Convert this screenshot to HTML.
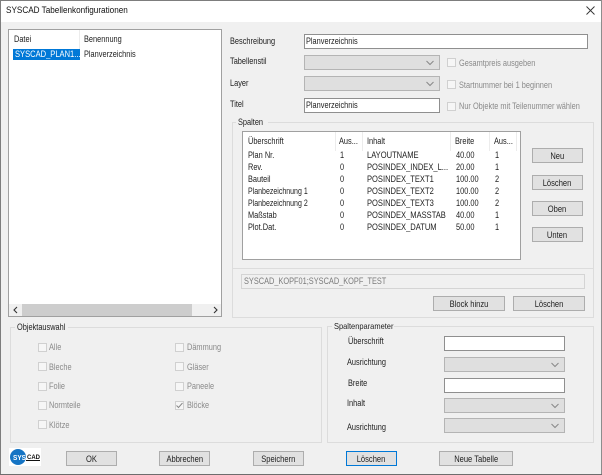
<!DOCTYPE html>
<html><head><meta charset="utf-8"><style>
*{box-sizing:border-box}
html,body{margin:0;padding:0}
body{width:602px;height:475px;overflow:hidden;background:#f0f0f0;position:relative;font:9px/12px "Liberation Sans",sans-serif;color:#222}
#w{position:absolute;left:0;top:0;width:602px;height:475px;filter:blur(.35px)}
.a{position:absolute}
.t{position:absolute;white-space:nowrap;height:12px;line-height:12px;transform:scaleX(.82);transform-origin:0 50%}
.u{transform:scaleX(.84)}
.p{transform:scaleX(.78)}
.d{color:#8a8a8a}
.in{position:absolute;background:#fff;border:1px solid #8f8f8f;height:15px}
.cb{position:absolute;background:#dfdfdf;border:1px solid #b4b4b4;height:15px}
.cb svg{position:absolute;right:5px;top:4px}
.ck{position:absolute;width:9px;height:9px;background:#f6f6f6;border:1px solid #d0d0d0}
.b{position:absolute;height:15px;background:#e1e1e1;border:1px solid #adadad;text-align:center;line-height:14px;white-space:nowrap}
.b span{display:inline-block;transform:scaleX(.84)}
.g{position:absolute;border:1px solid #dcdcdc}
.gl{position:absolute;background:#f0f0f0;height:4px}
.s{position:absolute;width:1px;background:#ececec}
</style></head><body><div id="w">
<div class="a" style="left:0;top:0;width:602px;height:22px;background:#fff"></div>
<div class="a" style="left:0;top:0;width:602px;height:1px;background:#7d7d7d"></div>
<div class="a" style="left:0;top:0;width:1px;height:475px;background:#7d7d7d"></div>
<div class="a" style="left:601px;top:0;width:1px;height:475px;background:#8d8d8d"></div>
<div class="a" style="left:0;top:474px;width:602px;height:1px;background:#6d6d6d"></div>
<div class="t" style="left:6px;top:5px;font-size:9.6px;color:#111;transform:scaleX(.85)">SYSCAD Tabellenkonfigurationen</div>
<svg class="a" style="left:586px;top:6px" width="9" height="9"><path d="M.5.5l8 8M8.500.5l-8 8" stroke="#333" stroke-width=".9" fill="none"/></svg>

<div class="a" style="left:8px;top:29px;width:214px;height:288px;background:#fff;border:1px solid #a0a0a0"></div>
<div class="s" style="left:79px;top:30px;height:19px"></div>
<div class="t" style="left:14px;top:33px">Datei</div>
<div class="t" style="left:84px;top:33px">Benennung</div>
<div class="a" style="left:13px;top:49px;width:67px;height:11px;background:#0078d7"></div>
<div class="t u" style="left:15px;top:48px;color:#fff">SYSCAD_PLAN1...</div>
<div class="t" style="left:84px;top:48px">Planverzeichnis</div>
<div class="a" style="left:9px;top:304px;width:212px;height:12px;background:#f0f0f0"></div>
<div class="a" style="left:22px;top:304px;width:170px;height:12px;background:#cdcdcd"></div>
<svg class="a" style="left:12px;top:306px" width="8" height="8"><path d="M5 1L2 4l3 3" stroke="#333" stroke-width="1.1" fill="none"/></svg>
<svg class="a" style="left:211px;top:306px" width="8" height="8"><path d="M3 1l3 3-3 3" stroke="#333" stroke-width="1.1" fill="none"/></svg>

<div class="t" style="left:230px;top:35px">Beschreibung</div>
<div class="t" style="left:230px;top:55px">Tabellenstil</div>
<div class="t" style="left:230px;top:77px">Layer</div>
<div class="t" style="left:230px;top:98px">Titel</div>
<div class="in" style="left:304px;top:34px;width:284px"></div><div class="t" style="left:306px;top:35px">Planverzeichnis</div>
<div class="cb" style="left:304px;top:55px;width:136px"><svg width="8" height="6"><path d="M.5 1l3.500 3.500L7.500 1" stroke="#888" fill="none"/></svg></div>
<div class="cb" style="left:304px;top:76px;width:136px"><svg width="8" height="6"><path d="M.5 1l3.500 3.500L7.500 1" stroke="#888" fill="none"/></svg></div>
<div class="in" style="left:304px;top:98px;width:136px"></div><div class="t" style="left:306px;top:99px">Planverzeichnis</div>
<div class="ck" style="left:447px;top:58px"></div><div class="t d" style="left:459px;top:57px">Gesamtpreis ausgeben</div>
<div class="ck" style="left:447px;top:80px"></div><div class="t d" style="left:459px;top:79px">Startnummer bei 1 beginnen</div>
<div class="ck" style="left:447px;top:102px"></div><div class="t d" style="left:459px;top:100px">Nur Objekte mit Teilenummer wählen</div>

<div class="g" style="left:232px;top:122px;width:362px;height:196px"></div>
<div class="gl" style="left:236px;top:120px;width:32px"></div>
<div class="t" style="left:238px;top:116px">Spalten</div>
<div class="a" style="left:232px;top:268px;width:362px;height:1px;background:#dcdcdc"></div>
<div class="a" style="left:242px;top:131px;width:279px;height:129px;background:#fff;border:1px solid #a0a0a0"></div>
<div class="s" style="left:335px;top:132px;height:19px"></div>
<div class="s" style="left:362px;top:132px;height:19px"></div>
<div class="s" style="left:450px;top:132px;height:19px"></div>
<div class="s" style="left:489px;top:132px;height:19px"></div>
<div class="s" style="left:516px;top:132px;height:19px"></div>
<div class="t" style="left:248px;top:135px">Überschrift</div><div class="t" style="left:339px;top:135px">Aus...</div><div class="t" style="left:367px;top:135px">Inhalt</div><div class="t" style="left:455px;top:135px">Breite</div><div class="t" style="left:494px;top:135px">Aus...</div>
<div class="t" style="left:248px;top:149px">Plan Nr.</div><div class="t" style="left:340px;top:149px">1</div><div class="t u" style="left:367px;top:149px">LAYOUTNAME</div><div class="t" style="left:456px;top:149px">40.00</div><div class="t" style="left:495px;top:149px">1</div>
<div class="t" style="left:248px;top:161px">Rev.</div><div class="t" style="left:340px;top:161px">0</div><div class="t u" style="left:367px;top:161px">POSINDEX_INDEX_L...</div><div class="t" style="left:456px;top:161px">20.00</div><div class="t" style="left:495px;top:161px">1</div>
<div class="t" style="left:248px;top:173px">Bauteil</div><div class="t" style="left:340px;top:173px">0</div><div class="t u" style="left:367px;top:173px">POSINDEX_TEXT1</div><div class="t" style="left:456px;top:173px">100.00</div><div class="t" style="left:495px;top:173px">2</div>
<div class="t p" style="left:248px;top:185px">Planbezeichnung 1</div><div class="t" style="left:340px;top:185px">0</div><div class="t u" style="left:367px;top:185px">POSINDEX_TEXT2</div><div class="t" style="left:456px;top:185px">100.00</div><div class="t" style="left:495px;top:185px">2</div>
<div class="t p" style="left:248px;top:197px">Planbezeichnung 2</div><div class="t" style="left:340px;top:197px">0</div><div class="t u" style="left:367px;top:197px">POSINDEX_TEXT3</div><div class="t" style="left:456px;top:197px">100.00</div><div class="t" style="left:495px;top:197px">2</div>
<div class="t" style="left:248px;top:209px">Maßstab</div><div class="t" style="left:340px;top:209px">0</div><div class="t u" style="left:367px;top:209px">POSINDEX_MASSTAB</div><div class="t" style="left:456px;top:209px">40.00</div><div class="t" style="left:495px;top:209px">1</div>
<div class="t" style="left:248px;top:221px">Plot.Dat.</div><div class="t" style="left:340px;top:221px">0</div><div class="t u" style="left:367px;top:221px">POSINDEX_DATUM</div><div class="t" style="left:456px;top:221px">50.00</div><div class="t" style="left:495px;top:221px">1</div>
<div class="b" style="left:532px;top:148px;width:51px"><span>Neu</span></div>
<div class="b" style="left:532px;top:175px;width:51px"><span>Löschen</span></div>
<div class="b" style="left:532px;top:201px;width:51px"><span>Oben</span></div>
<div class="b" style="left:532px;top:227px;width:51px"><span>Unten</span></div>
<div class="a" style="left:241px;top:274px;width:344px;height:15px;border:1px solid #d4d4d4"></div>
<div class="t u" style="left:244px;top:275px;color:#7a7a7a;transform:scaleX(.82)">SYSCAD_KOPF01;SYSCAD_KOPF_TEST</div>
<div class="b" style="left:433px;top:296px;width:72px"><span>Block hinzu</span></div>
<div class="b" style="left:513px;top:296px;width:72px"><span>Löschen</span></div>

<div class="g" style="left:10px;top:327px;width:312px;height:116px"></div>
<div class="gl" style="left:15px;top:325px;width:53px"></div>
<div class="t" style="left:17px;top:321px">Objektauswahl</div>
<div class="ck" style="left:38px;top:343px"></div><div class="t d" style="left:49px;top:341px">Alle</div>
<div class="ck" style="left:38px;top:362px"></div><div class="t d" style="left:49px;top:361px">Bleche</div>
<div class="ck" style="left:38px;top:382px"></div><div class="t d" style="left:49px;top:380px">Folie</div>
<div class="ck" style="left:38px;top:401px"></div><div class="t d" style="left:49px;top:399px">Normteile</div>
<div class="ck" style="left:38px;top:420px"></div><div class="t d" style="left:49px;top:419px">Klötze</div>
<div class="ck" style="left:175px;top:343px"></div><div class="t d" style="left:187px;top:341px">Dämmung</div>
<div class="ck" style="left:175px;top:362px"></div><div class="t d" style="left:187px;top:361px">Gläser</div>
<div class="ck" style="left:175px;top:382px"></div><div class="t d" style="left:187px;top:380px">Paneele</div>
<div class="ck" style="left:175px;top:401px"><svg class="a" style="left:0;top:0" width="7" height="7"><path d="M.5 3.500l2 2 4-4.500" stroke="#888" fill="none"/></svg></div><div class="t d" style="left:187px;top:399px">Blöcke</div>

<div class="g" style="left:327px;top:326px;width:267px;height:117px"></div>
<div class="gl" style="left:332px;top:324px;width:62px"></div>
<div class="t" style="left:334px;top:320px;font-size:8.500px;transform:scaleX(.88)">Spaltenparameter</div>
<div class="t" style="left:348px;top:335px">Überschrift</div>
<div class="t" style="left:347px;top:356px">Ausrichtung</div>
<div class="t" style="left:348px;top:377px">Breite</div>
<div class="t" style="left:347px;top:397px">Inhalt</div>
<div class="t" style="left:347px;top:421px">Ausrichtung</div>
<div class="in" style="left:444px;top:336px;width:121px"></div>
<div class="cb" style="left:444px;top:357px;width:121px"><svg width="8" height="6"><path d="M.5 1l3.500 3.500L7.500 1" stroke="#888" fill="none"/></svg></div>
<div class="in" style="left:444px;top:378px;width:121px"></div>
<div class="cb" style="left:444px;top:398px;width:121px"><svg width="8" height="6"><path d="M.5 1l3.500 3.500L7.500 1" stroke="#888" fill="none"/></svg></div>
<div class="cb" style="left:444px;top:418px;width:121px"><svg width="8" height="6"><path d="M.5 1l3.500 3.500L7.500 1" stroke="#888" fill="none"/></svg></div>

<svg class="a" style="left:9px;top:448px" width="32" height="18"><rect width="32" height="18" fill="#fff"/><circle cx="9" cy="9" r="8" fill="#1574c4"/><text x="4" y="12" font-family="Liberation Sans" font-weight="700" font-size="7" textLength="13" lengthAdjust="spacingAndGlyphs" fill="#fff">SYS</text><text x="18" y="11" font-family="Liberation Sans" font-weight="700" font-size="6" textLength="13" lengthAdjust="spacingAndGlyphs" fill="#111">CAD</text><rect x="17" y="12" width="14" height="1" fill="#111"/></svg>
<div class="b" style="left:66px;top:451px;width:51px"><span>OK</span></div>
<div class="b" style="left:159px;top:451px;width:51px"><span>Abbrechen</span></div>
<div class="b" style="left:253px;top:451px;width:51px"><span>Speichern</span></div>
<div class="b" style="left:346px;top:451px;width:51px;border-color:#0078d7"><span>Löschen</span></div>
<div class="b" style="left:439px;top:451px;width:74px"><span>Neue Tabelle</span></div>
</div></body></html>
